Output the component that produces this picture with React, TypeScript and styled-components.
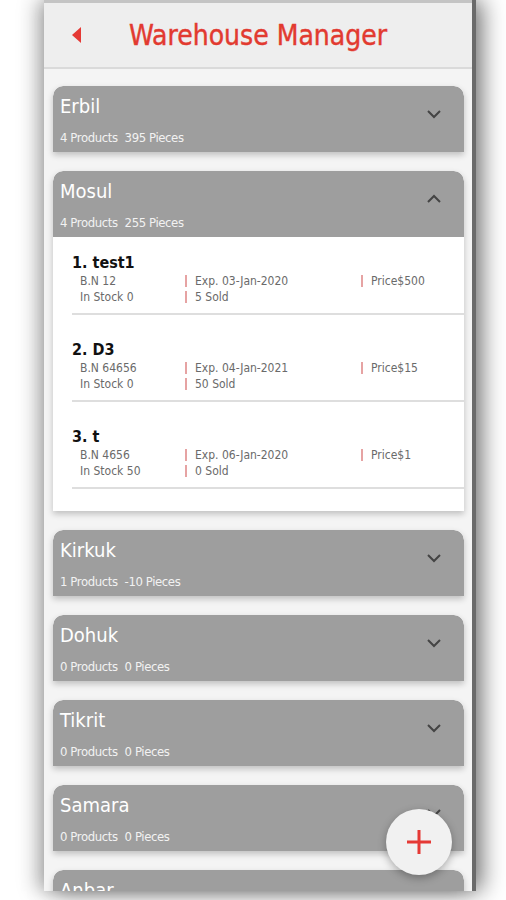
import React from "react";
import styled, { createGlobalStyle } from "styled-components";

const Global = createGlobalStyle`
  html, body { margin: 0; padding: 0; background: #ffffff; }
  body { font-family: "DejaVu Sans Condensed", "Liberation Sans Narrow", "Liberation Sans", sans-serif; }
`;

const FONT = `"DejaVu Sans Condensed", "Liberation Sans Narrow", sans-serif`;

const Page = styled.div`
  width: 506px;
  height: 900px;
  background: #ffffff;
  padding-left: 44px;
  box-sizing: border-box;
  overflow: hidden;
`;

const Phone = styled.div`
  position: relative;
  width: 428px;
  height: 891px;
  background: #f4f4f4;
  border-top: 3px solid #c4c4c4;
  box-sizing: border-box;
  overflow: hidden;
  box-shadow: 4px 0 0 #6a6a6a, 10px 0 22px rgba(0, 0, 0, 0.55), -8px 0 18px rgba(0, 0, 0, 0.25);
`;

const Header = styled.header`
  display: grid;
  grid-template-columns: 64px 1fr 64px;
  align-items: center;
  height: 64px;
  background: #eeeeee;
  border-bottom: 2px solid #dadada;
`;

const BackArrow = styled.div`
  justify-self: start;
  margin-left: 28px;
  width: 0;
  height: 0;
  border-top: 8px solid transparent;
  border-bottom: 8px solid transparent;
  border-right: 9px solid #e53935;
`;

const Title = styled.h1`
  margin: 0;
  text-align: center;
  font-family: ${FONT};
  font-size: 28px;
  font-weight: 500;
  letter-spacing: 0;
  color: #e23a30;
  -webkit-text-stroke: 0.4px #e23a30;
`;

const List = styled.div`
  display: flex;
  flex-direction: column;
  gap: 19px;
  padding: 17px 8px 0 9px;
`;

const Card = styled.section`
  border-radius: 10px 10px 0 0;
  background: #ffffff;
  box-shadow: 0 3px 6px rgba(0, 0, 0, 0.22);
  overflow: hidden;
`;

const CardHead = styled.div`
  display: flex;
  align-items: flex-start;
  justify-content: space-between;
  height: 66px;
  box-sizing: border-box;
  padding: 0 22px 0 7px;
  background: #9e9e9e;
  border-radius: 10px 10px 0 0;
`;

const HeadText = styled.div`
  display: flex;
  flex-direction: column;
  gap: 13px;
  padding-top: 9px;
`;

const CityName = styled.div`
  font-family: ${FONT};
  font-size: 20px;
  line-height: 22px;
  color: #ffffff;
`;

const CityStats = styled.div`
  font-family: ${FONT};
  font-size: 13px;
  line-height: 15px;
  letter-spacing: -0.4px;
  color: #f2f2f2;
  display: flex;
  gap: 7px;
`;

const ChevronBox = styled.div`
  margin-top: 23px;
  display: flex;
`;

const Content = styled.div`
  padding: 0 0 22px 19px;
  background: #ffffff;
`;

const Item = styled.div`
  padding-top: 16px;
  border-bottom: 2px solid #dedede;
  padding-bottom: 8px;
  & + & {
    padding-top: 25px;
  }
`;

const ItemTitle = styled.div`
  font-family: ${FONT};
  font-size: 16px;
  line-height: 20px;
  font-weight: 600;
  color: #111111;
`;

const Details = styled.div`
  display: grid;
  grid-template-columns: 105px 176px 1fr;
  padding-left: 8px;
`;

const Cell = styled.div<{ $div?: boolean }>`
  font-family: ${FONT};
  font-size: 12px;
  line-height: 16px;
  color: #6a6a6a;
  position: relative;
  padding-left: ${(p) => (p.$div ? "10px" : "0")};
  ${(p) =>
    p.$div
      ? `&::before { content: ""; position: absolute; left: 0; top: 2px; bottom: 2px; width: 2px; background: #e6a3a3; }`
      : ""}
`;

const Fab = styled.button`
  position: absolute;
  left: 342px;
  top: 806px;
  width: 66px;
  height: 66px;
  border-radius: 50%;
  border: none;
  background: #f1f1f1;
  box-shadow: 0 3px 8px rgba(0, 0, 0, 0.3);
  display: flex;
  align-items: center;
  justify-content: center;
  padding: 0;
`;

const Chevron = ({ up }: { up?: boolean }) => (
  <svg width="16" height="10" viewBox="0 0 16 10">
    <path
      d={up ? "M2 8 L8 2 L14 8" : "M2 2 L8 8 L14 2"}
      fill="none"
      stroke="#444"
      strokeWidth="2"
    />
  </svg>
);

type Product = { name: string; bn: string; exp: string; price: string; stock: string; sold: string };

const mosul: Product[] = [
  { name: "1. test1", bn: "B.N 12", exp: "Exp. 03-Jan-2020", price: "Price$500", stock: "In Stock 0", sold: "5 Sold" },
  { name: "2. D3", bn: "B.N 64656", exp: "Exp. 04-Jan-2021", price: "Price$15", stock: "In Stock 0", sold: "50 Sold" },
  { name: "3. t", bn: "B.N 4656", exp: "Exp. 06-Jan-2020", price: "Price$1", stock: "In Stock 50", sold: "0 Sold" },
];

const cities = [
  { name: "Erbil", products: 4, pieces: 395, open: false },
  { name: "Mosul", products: 4, pieces: 255, open: true },
  { name: "Kirkuk", products: 1, pieces: -10, open: false },
  { name: "Dohuk", products: 0, pieces: 0, open: false },
  { name: "Tikrit", products: 0, pieces: 0, open: false },
  { name: "Samara", products: 0, pieces: 0, open: false },
  { name: "Anbar", products: 0, pieces: 0, open: false },
];

export default function App() {
  return (
    <Page>
      <Global />
      <Phone>
        <Header>
          <BackArrow />
          <Title>Warehouse Manager</Title>
          <div />
        </Header>
        <List>
          {cities.map((c) => (
            <Card key={c.name}>
              <CardHead>
                <HeadText>
                  <CityName>{c.name}</CityName>
                  <CityStats>
                    <span>{c.products} Products</span>
                    <span>{c.pieces} Pieces</span>
                  </CityStats>
                </HeadText>
                <ChevronBox>
                  <Chevron up={c.open} />
                </ChevronBox>
              </CardHead>
              {c.open && (
                <Content>
                  {mosul.map((p) => (
                    <Item key={p.name}>
                      <ItemTitle>{p.name}</ItemTitle>
                      <Details>
                        <Cell>{p.bn}</Cell>
                        <Cell $div>{p.exp}</Cell>
                        <Cell $div>{p.price}</Cell>
                        <Cell>{p.stock}</Cell>
                        <Cell $div>{p.sold}</Cell>
                      </Details>
                    </Item>
                  ))}
                </Content>
              )}
            </Card>
          ))}
        </List>
        <Fab aria-label="add">
          <svg width="28" height="28" viewBox="0 0 28 28">
            <path d="M14 2 V26 M2 14 H26" stroke="#e53935" strokeWidth="3" />
          </svg>
        </Fab>
      </Phone>
    </Page>
  );
}
